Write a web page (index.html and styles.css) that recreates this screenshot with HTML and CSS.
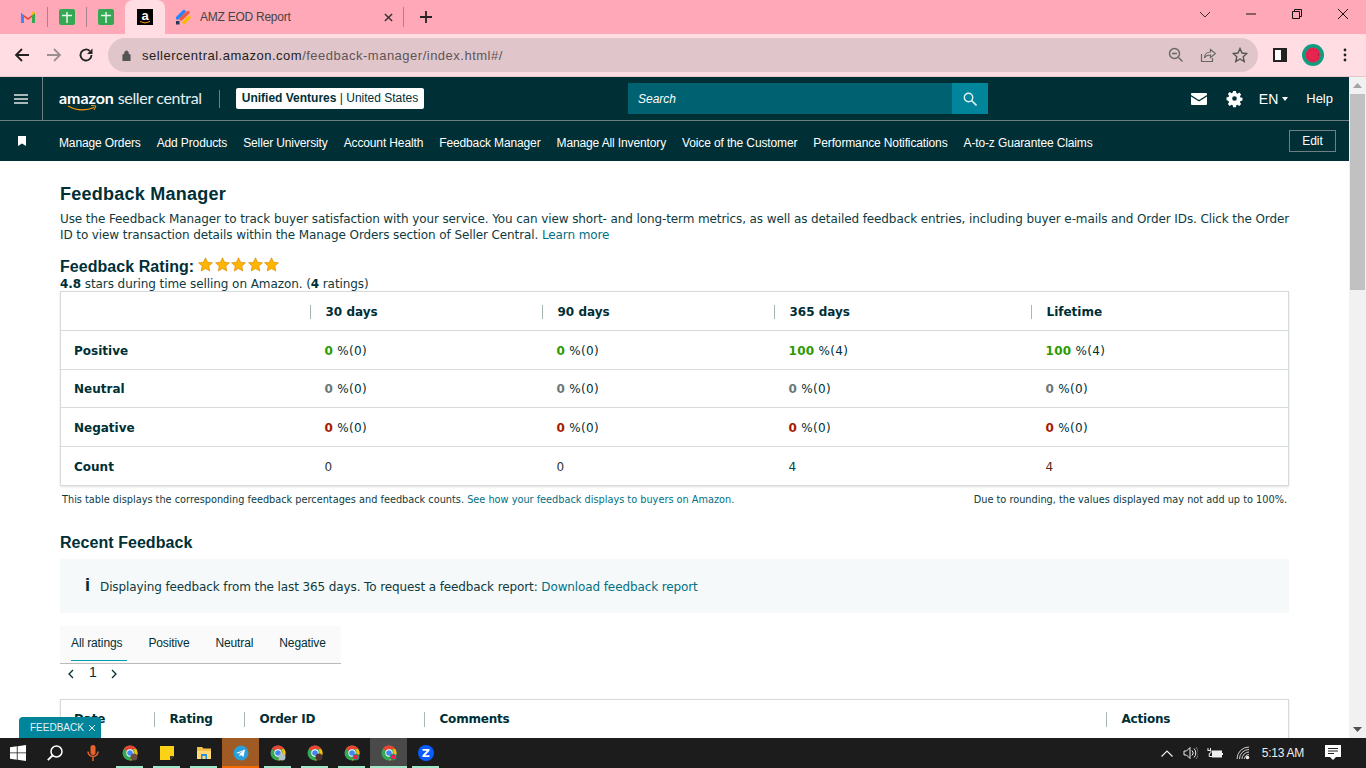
FILE: index.html
```html
<!DOCTYPE html>
<html lang="en">
<head>
<meta charset="utf-8">
<title>AMZ EOD Report</title>
<link rel="stylesheet" href="styles.css">
</head>
<body>
<div class="tabstrip">
  <div class="pinned">
    <svg class="fav" viewBox="0 0 16 16"><path d="M1 14V4l7 5 7-5v10h-3V8L8 11 4 8v6z" fill="#ea4335"/><path d="M1 14V4l3 2.500V14z" fill="#4285f4"/><path d="M12 14V6.500L15 4v10z" fill="#34a853"/><path d="M12 6.500 15 4v-.5L13 2.500l-1 1z" fill="#fbbc04"/></svg>
  </div>
  <i class="tabsep"></i>
  <div class="pinned"><svg class="fav" viewBox="0 0 16 16"><rect width="16" height="16" rx="2" fill="#34a853"/><path d="M8 3v11M3 6.500h10" stroke="#e6f4ea" stroke-width="1.500"/></svg></div>
  <i class="tabsep"></i>
  <div class="pinned"><svg class="fav" viewBox="0 0 16 16"><rect width="16" height="16" rx="2" fill="#34a853"/><path d="M8 3v11M3 6.500h10" stroke="#e6f4ea" stroke-width="1.500"/></svg></div>
  <div class="pinned active">
    <svg class="fav" viewBox="0 0 16 16"><rect width="16" height="16" fill="#000"/><text x="8" y="11" class="fav-a">a</text><path d="M3 12.500q5 3 10 0" stroke="#f90" fill="none"/></svg>
  </div>
  <div class="tab">
    <svg class="fav" viewBox="0 0 16 16"><path d="M2.500 9 9 2.500" stroke="#2684ff" stroke-width="3.400" stroke-linecap="round"/><path d="M6 10 13 3.500" stroke="#ef5a3c" stroke-width="3.400" stroke-linecap="round"/><path d="M9 13.500l5-5" stroke="#ffb900" stroke-width="3.400" stroke-linecap="round"/><path d="M1 12h3.500v3.500H1z" fill="#253858"/></svg>
    <span class="tab-title">AMZ EOD Report</span>
    <svg class="tab-x" viewBox="0 0 10 10"><path d="M1 1l8 8M9 1l-8 8" stroke="#333" stroke-width="1.600"/></svg>
  </div>
  <i class="tabsep"></i>
  <svg class="newtab" viewBox="0 0 12 12"><path d="M6 0v12M0 6h12" stroke="#222" stroke-width="1.800"/></svg>
  <div class="wincontrols">
    <svg class="wc-chev" viewBox="0 0 12 7"><path d="M1 1l5 5 5-5" fill="none" stroke="#333"/></svg>
    <svg class="wc" viewBox="0 0 12 12"><path d="M1 6h10" stroke="#111"/></svg>
    <svg class="wc" viewBox="0 0 12 12"><path d="M1.500 3.500h7v7h-7zM3.500 3.500v-2h7v7h-2" fill="none" stroke="#111"/></svg>
    <svg class="wc" viewBox="0 0 12 12"><path d="M1 1l10 10M11 1 1 11" stroke="#111"/></svg>
  </div>
</div>
<div class="toolbar">
  <svg class="tb-ico" viewBox="0 0 16 16"><path d="M15 8H2M8 2 2 8l6 6" fill="none" stroke="#222" stroke-width="1.800"/></svg>
  <svg class="tb-ico" viewBox="0 0 16 16"><path d="M1 8h13M8 2l6 6-6 6" fill="none" stroke="#9b8f92" stroke-width="1.800"/></svg>
  <svg class="tb-ico" viewBox="0 0 16 16"><path d="M13.500 8A5.500 5.500 0 1 1 11.800 4" fill="none" stroke="#222" stroke-width="1.800"/><path d="M14.500 1.500v5.500H9z" fill="#222"/></svg>
  <div class="omnibox">
    <svg class="lock" viewBox="0 0 10 12"><path d="M1 5h8v7H1zM3 5V3a2 2 0 0 1 4 0v2" fill="#555" stroke="#555"/></svg>
    <span class="url"><span class="url-host">sellercentral.amazon.com</span>/feedback-manager/index.html#/</span>
    <div class="omni-end">
      <svg class="omni-ico" viewBox="0 0 16 16"><circle cx="6.500" cy="6.500" r="5" fill="none" stroke="#666" stroke-width="1.400"/><path d="M4 6.500h5M10.500 10.500l4 4" stroke="#666" stroke-width="1.400"/></svg>
      <svg class="omni-ico" viewBox="0 0 16 16"><path d="M1.500 7v7.500h11V11" fill="none" stroke="#666" stroke-width="1.200"/><path d="M4.500 11c0-4 3-6 6-6V2.500l5 4-5 4V8c-3 0-5 1-6 3z" fill="none" stroke="#666" stroke-width="1.200"/></svg>
      <svg class="omni-ico" viewBox="0 0 16 16"><path d="M8 1.500l2 4.500 4.800.5-3.600 3.200 1 4.800L8 12l-4.200 2.500 1-4.800L1.200 6.500 6 6z" fill="none" stroke="#555" stroke-width="1.400"/></svg>
    </div>
  </div>
  <div class="tb-right">
    <svg class="side-ico" viewBox="0 0 14 14"><path d="M0 0h14v14H0z" fill="#222"/><path d="M2 2h6v10H2z" fill="#fff"/></svg>
    <svg class="avatar" viewBox="0 0 22 22"><circle cx="11" cy="11" r="11" fill="#0f9d80"/><circle cx="11" cy="11" r="7.500" fill="#e8254f"/><circle cx="11" cy="11" r="5.500" fill="none" stroke="#7a1030" stroke-width=".8" stroke-dasharray=".8 2.800"/></svg>
    <svg class="kebab" viewBox="0 0 4 14"><circle cx="2" cy="2" r="1.400" fill="#222"/><circle cx="2" cy="7" r="1.400" fill="#222"/><circle cx="2" cy="12" r="1.400" fill="#222"/></svg>
  </div>
</div>
<div class="viewport">
  <div class="page">
    <header class="head">
      <div class="burger"><svg viewBox="0 0 14 10"><path d="M0 1h14M0 5h14M0 9h14" stroke="#dfe6e7" stroke-width="1.300"/></svg></div>
      <div class="logo">
        <span class="logo-a">amazon</span><span class="logo-b">seller central</span>
        <svg class="smile" viewBox="0 0 30 7"><path d="M1 1q13 7 26 1.500" fill="none" stroke="#f90" stroke-width="1.300"/><path d="M24 .5l5 .5-2 4" fill="none" stroke="#f90"/></svg>
      </div>
      <i class="head-sep"></i>
      <div class="account"><b>Unified Ventures</b> | United States</div>
      <div class="search">
        <span class="search-text">Search</span>
        <span class="search-btn"><svg viewBox="0 0 14 14"><circle cx="5.500" cy="5.500" r="4.200" fill="none" stroke="#e6f1f3" stroke-width="1.400"/><path d="M8.500 8.500l5 5" stroke="#e6f1f3" stroke-width="1.600"/></svg></span>
      </div>
      <div class="head-right">
        <svg class="mail" viewBox="0 0 16 12"><path d="M1 0h14a1 1 0 0 1 1 1v1L8 7 0 2V1a1 1 0 0 1 1-1z" fill="#fff"/><path d="M0 3.500 8 8.500l8-5V11a1 1 0 0 1-1 1H1a1 1 0 0 1-1-1z" fill="#fff"/></svg>
        <svg class="gear" viewBox="0 0 16 16"><path fill-rule="evenodd" fill="#fff" d="M6.500 0h3l.4 2.200 1.300.6L13.100 1.500l2 2.100-1.300 1.900.6 1.300 2.100.4v3l-2.100.4-.6 1.300 1.300 1.900-2 2.100-1.900-1.300-1.300.6-.4 2.200h-3l-.4-2.200-1.300-.6-1.900 1.300-2-2.100 1.300-1.900-.6-1.300L-.5 9.700v-3l2.100-.4.6-1.300L.9 3.100l2-2.100 1.900 1.300 1.300-.6zM8 5.500a2.500 2.500 0 1 0 0 5 2.500 2.500 0 0 0 0-5z"/></svg>
        <span class="lang">EN<i class="caret"></i></span>
        <span class="help">Help</span>
      </div>
    </header>
    <nav class="nav">
      <svg class="bookmark" viewBox="0 0 8 10"><path d="M0 0h8v10L4 7.500 0 10z" fill="#fff"/></svg>
      <div class="nav-links">
        <a>Manage Orders</a><a>Add Products</a><a>Seller University</a><a>Account Health</a><a>Feedback Manager</a><a>Manage All Inventory</a><a>Voice of the Customer</a><a>Performance Notifications</a><a>A-to-z Guarantee Claims</a>
      </div>
      <span class="edit">Edit</span>
    </nav>
    <main class="content">
      <h1 class="title">Feedback Manager</h1>
      <p class="intro">Use the Feedback Manager to track buyer satisfaction with your service. You can view short- and long-term metrics, as well as detailed feedback entries, including buyer e-mails and Order IDs. Click the Order ID to view transaction details within the Manage Orders section of Seller Central. <a class="link">Learn more</a></p>
      <div class="rating-head">
        <h2 class="subtitle">Feedback Rating:</h2>
        <div class="stars">
          <svg viewBox="0 0 16 16"><path class="star" d="M8 .8l2.200 4.800 5.200.6-3.900 3.500 1.100 5.200L8 12.300l-4.600 2.600 1.100-5.200L.6 6.200l5.200-.6z"/></svg>
          <svg viewBox="0 0 16 16"><path class="star" d="M8 .8l2.200 4.800 5.200.6-3.900 3.500 1.100 5.200L8 12.300l-4.600 2.600 1.100-5.200L.6 6.200l5.200-.6z"/></svg>
          <svg viewBox="0 0 16 16"><path class="star" d="M8 .8l2.200 4.800 5.200.6-3.900 3.500 1.100 5.200L8 12.300l-4.600 2.600 1.100-5.200L.6 6.200l5.200-.6z"/></svg>
          <svg viewBox="0 0 16 16"><path class="star" d="M8 .8l2.200 4.800 5.200.6-3.900 3.500 1.100 5.200L8 12.300l-4.600 2.600 1.100-5.200L.6 6.200l5.200-.6z"/></svg>
          <svg viewBox="0 0 16 16"><path class="star" d="M8 .8l2.200 4.800 5.200.6-3.900 3.500 1.100 5.200L8 12.300l-4.600 2.600 1.100-5.200L.6 6.200l5.200-.6z"/></svg>
        </div>
      </div>
      <p class="rating-line"><b>4.8</b> stars during time selling on Amazon. (<b>4</b> ratings)</p>
      <table class="card metrics">
        <colgroup><col class="c0"><col class="c1"><col class="c1"><col class="c2"><col></colgroup>
        <thead>
          <tr><th></th><th><span class="th-in">30 days</span></th><th><span class="th-in">90 days</span></th><th><span class="th-in">365 days</span></th><th><span class="th-in">Lifetime</span></th></tr>
        </thead>
        <tbody>
          <tr class="r39"><th>Positive</th><td><b class="green">0</b> %(0)</td><td><b class="green">0</b> %(0)</td><td><b class="green">100</b> %(4)</td><td><b class="green">100</b> %(4)</td></tr>
          <tr class="r38"><th>Neutral</th><td><b class="grey">0</b> %(0)</td><td><b class="grey">0</b> %(0)</td><td><b class="grey">0</b> %(0)</td><td><b class="grey">0</b> %(0)</td></tr>
          <tr class="r39"><th>Negative</th><td><b class="red">0</b> %(0)</td><td><b class="red">0</b> %(0)</td><td><b class="red">0</b> %(0)</td><td><b class="red">0</b> %(0)</td></tr>
          <tr class="r39"><th>Count</th><td class="plain">0</td><td class="plain">0</td><td class="teal">4</td><td class="orange">4</td></tr>
        </tbody>
      </table>
      <div class="note">
        <span>This table displays the corresponding feedback percentages and feedback counts. <a class="link">See how your feedback displays to buyers on Amazon.</a></span>
        <span>Due to rounding, the values displayed may not add up to 100%.</span>
      </div>
      <h2 class="subtitle recent">Recent Feedback</h2>
      <div class="info">
        <span class="info-i">i</span>
        <span>Displaying feedback from the last 365 days. To request a feedback report: <a class="link">Download feedback report</a></span>
      </div>
      <div class="tabs">
        <span class="rtab on">All ratings</span><span class="rtab">Positive</span><span class="rtab">Neutral</span><span class="rtab">Negative</span>
      </div>
      <div class="pager">
        <svg viewBox="0 0 6 10"><path d="M5 1 1 5l4 4" fill="none" stroke="#002f36" stroke-width="1.300"/></svg>
        <span class="pg-num">1</span>
        <svg viewBox="0 0 6 10"><path d="M1 1l4 4-4 4" fill="none" stroke="#002f36" stroke-width="1.300"/></svg>
      </div>
      <div class="card list-head">
        <span class="lh lh-date">Date</span>
        <span class="lh lh-rating">Rating</span>
        <span class="lh lh-order">Order ID</span>
        <span class="lh lh-comments">Comments</span>
        <span class="lh lh-actions">Actions</span>
      </div>
    </main>
    <div class="feedback-tab">FEEDBACK<svg viewBox="0 0 8 8"><path d="M1 1l6 6M7 1 1 7" stroke="#e6f1f3"/></svg></div>
  </div>
  <div class="scrollbar">
    <svg class="arrow" viewBox="0 0 9 5"><path d="M4.500 0 9 5H0z" fill="#a3a3a3"/></svg>
    <div class="thumb"></div>
    <svg class="arrow down" viewBox="0 0 9 5"><path d="M0 0h9L4.500 5z" fill="#505050"/></svg>
  </div>
</div>
<footer class="taskbar">
  <svg class="tk-win" viewBox="0 0 16 16"><path d="M0 2.300 6.800 1.300v6.200H0zM7.600 1.200 16 0v7.500H7.600zM0 8.300h6.800v6.400L0 13.700zM7.600 8.300H16V16l-8.400-1.200z" fill="#fff"/></svg>
  <svg class="tk-search" viewBox="0 0 16 16"><circle cx="9.500" cy="6.500" r="5.500" fill="none" stroke="#fff" stroke-width="1.500"/><path d="M5.500 10.500 .8 15.200" stroke="#fff" stroke-width="1.800"/></svg>
  <svg class="tk-mic" viewBox="0 0 12 16"><rect x="3.500" y="0" width="5" height="10" rx="2.500" fill="#e8622c"/><path d="M1 6.500a5 5 0 0 0 10 0M6 11.500V16" fill="none" stroke="#e8622c" stroke-width="1.500"/></svg>
  <div class="tk-apps">
    <div class="tk-app run"><svg viewBox="0 0 16 16"><use href="#chrome"/><circle cx="12" cy="12" r="3.500" fill="#6d4c41"/></svg></div>
    <div class="tk-app run"><svg viewBox="0 0 16 16"><path d="M1 1h14v10l-4 4H1z" fill="#fcd116"/><path d="M15 11h-4v4z" fill="#333"/></svg></div>
    <div class="tk-app run"><svg viewBox="0 0 16 16"><path d="M1 2h5l1.500 1.500H15V14H1z" fill="#f5c04a"/><path d="M1 6h14v8H1z" fill="#ffd978"/><path d="M5 9h6v5H9.500v-3h-3v3H5z" fill="#2b8fdc"/></svg></div>
    <div class="tk-app tg"><svg viewBox="0 0 16 16"><circle cx="8" cy="8" r="7.500" fill="#2a9fd8"/><path d="M3 8l9-3.500L10.500 12 8 10l-1.500 1.500V9l4-3.500-5 3z" fill="#fff"/></svg></div>
    <div class="tk-app run"><svg viewBox="0 0 16 16"><use href="#chrome"/><circle cx="12" cy="12" r="3.500" fill="#b0bec5"/></svg></div>
    <div class="tk-app run"><svg viewBox="0 0 16 16"><use href="#chrome"/><circle cx="12" cy="12" r="3.500" fill="#4e342e"/></svg></div>
    <div class="tk-app run"><svg viewBox="0 0 16 16"><use href="#chrome"/><circle cx="12" cy="12" r="3" fill="#e8254f" stroke="#0f9d80"/></svg></div>
    <div class="tk-app run cur"><svg viewBox="0 0 16 16"><use href="#chrome"/><circle cx="12" cy="12" r="3" fill="#e8254f" stroke="#0f9d80"/></svg></div>
    <div class="tk-app run"><svg viewBox="0 0 16 16"><circle cx="8" cy="8" r="8" fill="#0b5cff"/><path d="M4.500 4h7v1.800L7.200 10.200h4.300V12h-7v-1.800l4.300-4.400H4.500z" fill="#fff"/></svg></div>
  </div>
  <div class="tray">
    <svg class="t-chev" viewBox="0 0 12 7"><path d="M.5 6.500 6 1l5.500 5.500" fill="none" stroke="#eee" stroke-width="1.200"/></svg>
    <svg class="t-vol" viewBox="0 0 15 14"><path d="M1 5h2.500L7 1.500v11L3.500 9H1z" fill="none" stroke="#eee"/><path d="M9 4.500a3.500 3.500 0 0 1 0 5M11 2.500a6.500 6.500 0 0 1 0 9" fill="none" stroke="#eee"/><path d="M13 1a9 9 0 0 1 0 12" fill="none" stroke="#777"/></svg>
    <svg class="t-bat" viewBox="0 0 16 11"><path d="M1 0v2.500M3.500 0v2.500M.5 2.500H4V4Q4 5.500 2.200 5.500V8.500H5" fill="none" stroke="#eee"/><rect x="5" y="2.500" width="10" height="7" fill="#eee"/><path d="M15 5h1v2h-1z" fill="#eee"/></svg>
    <svg class="t-wifi" viewBox="0 0 14 14"><path d="M1 13A12 12 0 0 1 13 1M3.500 13A9.500 9.500 0 0 1 13 3.500M6 13a7 7 0 0 1 7-7M8.500 13A4.500 4.500 0 0 1 13 8.500" fill="none" stroke="#cfcfcf"/><circle cx="11.500" cy="11.500" r="1.800" fill="#eee"/></svg>
    <span class="clock">5:13 AM</span>
    <svg class="t-note" viewBox="0 0 16 16"><path d="M0 0h16v12h-5l-3 3-3-3H0z" fill="#fff"/><path d="M3 3.500h10M3 6h10M3 8.500h6" stroke="#222"/></svg>
  </div>
</footer>
<svg class="defs" width="0" height="0"><defs>
  <g id="chrome"><circle cx="8" cy="8" r="7.500" fill="#34a853"/><path d="M8 .5a7.500 7.500 0 0 1 6.500 3.750H8A3.750 3.750 0 0 0 4.700 6.100L1.900 3.700A7.500 7.500 0 0 1 8 .5z" fill="#ea4335"/><path d="M14.500 4.250A7.500 7.500 0 0 1 8 15.500l3.200-5.500a3.750 3.750 0 0 0 0-5.750z" fill="#fbbc04"/><circle cx="8" cy="8" r="3.700" fill="#fff"/><circle cx="8" cy="8" r="2.800" fill="#4285f4"/></g>
</defs></svg>
</body>
</html>
```
FILE: styles.css
```css
* { box-sizing: border-box; }
html, body { margin: 0; height: 768px; overflow: hidden; }
body { display: flex; flex-direction: column; width: 1366px; font-family: "DejaVu Sans", sans-serif; color: #002f36; background: #fff; }
p, h1, h2 { margin: 0; }
svg { display: block; flex: none; }
.defs { position: absolute; }

/* browser chrome */
.tabstrip { height: 34px; flex: none; background: #ffa9b8; display: flex; align-items: center; padding-left: 9px; position: relative; font-family: "Open Sans", sans-serif; }
.pinned { width: 38px; height: 34px; display: flex; align-items: center; justify-content: center; }
.fav { width: 16px; height: 16px; }
.fav-a { font: bold 13px "Liberation Sans", sans-serif; fill: #fff; text-anchor: middle; }
.pinned.active { width: 40px; background: #ffdde3; border-radius: 8px 8px 0 0; }
.tabsep { width: 1px; height: 20px; background: #a9838c; flex: none; }
.tab { width: 238px; height: 34px; display: flex; align-items: center; padding-left: 10px; }
.tab-title { font-size: 12px; color: #444; margin-left: 9px; flex: 1; font-family: "Liberation Sans", sans-serif; letter-spacing: -.25px; }
.tab-x { width: 9px; height: 9px; margin-right: 10px; }
.newtab { width: 12px; height: 12px; margin-left: 16px; }
.wincontrols { position: absolute; right: 0; top: 0; height: 28px; display: flex; align-items: center; }
.wc-chev { width: 12px; height: 7px; margin-right: 34px; }
.wc { width: 12px; height: 12px; margin-right: 34px; }
.wc:last-child { margin-right: 17px; }

.toolbar { height: 43px; flex: none; background: #ffdde3; display: flex; align-items: center; padding-left: 14px; border-bottom: 1px solid #e9c6cc; }
.tb-ico { width: 16px; height: 16px; margin-right: 16px; }
.omnibox { width: 1150px; height: 34px; margin-left: -2px; background: #e0c6ca; border-radius: 17px; display: flex; align-items: center; padding-left: 14px; }
.lock { width: 9px; height: 11px; }
.url { font: 13px "Liberation Sans", sans-serif; color: #5f5558; margin-left: 11px; letter-spacing: .5px; }
.url-host { color: #222; }
.omni-end { margin-left: auto; display: flex; gap: 16px; padding-right: 10px; }
.omni-ico { width: 16px; height: 16px; }
.tb-right { display: flex; align-items: center; margin-left: 15px; }
.side-ico { width: 14px; height: 14px; }
.avatar { width: 22px; height: 22px; margin-left: 15px; }
.kebab { width: 4px; height: 14px; margin-left: 19px; }

/* viewport */
.viewport { flex: 1; display: flex; min-height: 0; position: relative; }
.page { flex: 1; min-width: 0; position: relative; overflow: hidden; display: flex; flex-direction: column; }
.scrollbar { width: 17px; flex: none; background: #f1f1f1; display: flex; flex-direction: column; align-items: center; padding-top: 6px; }
.arrow { width: 9px; height: 5px; }
.thumb { width: 15px; height: 196px; background: #c1c1c1; margin-top: 6px; }
.arrow.down { margin-top: auto; margin-bottom: 6px; }

.head { height: 44px; flex: none; background: #002f36; border-bottom: 1px solid #6d7f80; display: flex; align-items: center; position: relative; }
.burger { width: 43px; height: 43px; border-right: 1px solid #6d8083; display: flex; align-items: center; justify-content: center; }
.burger svg { width: 14px; height: 10px; }
.logo { margin-left: 16px; margin-top: -3px; position: relative; display: flex; align-items: baseline; color: #fff; font-family: "Lato", sans-serif; white-space: nowrap; }
.logo-a { font-size: 16px; font-weight: bold; letter-spacing: -.05px; }
.logo-b { font-size: 16px; margin-left: 4px; letter-spacing: -.35px; color: #e8eeee; }
.smile { position: absolute; left: 8px; top: 17px; width: 30px; height: 7px; }
.head-sep { width: 1px; height: 18px; background: #6d8083; margin-left: 17px; flex: none; }
.account { margin-left: 16px; height: 21px; padding: 0 6px; background: #fff; border-radius: 2px; color: #002f36; font: 12px/21px "Liberation Sans", sans-serif; white-space: nowrap; }
.search { position: absolute; left: 628px; top: 6px; width: 360px; height: 31px; background: #006170; display: flex; align-items: center; justify-content: space-between; padding-left: 10px; }
.search-text { color: #fff; font: italic 12px "Liberation Sans", sans-serif; }
.search-btn { width: 36px; height: 31px; background: #00859b; display: flex; align-items: center; justify-content: center; }
.search-btn svg { width: 14px; height: 14px; }
.head-right { margin-left: auto; display: flex; align-items: center; color: #fff; font: 14px "Liberation Sans", sans-serif; padding-right: 16px; }
.mail { width: 16px; height: 12px; }
.gear { width: 15px; height: 15px; margin-left: 20px; overflow: visible; }
.lang { margin-left: 17px; display: flex; align-items: center; }
.caret { width: 0; height: 0; border: 3.500px solid transparent; border-top: 4px solid #fff; border-bottom: 0; margin-left: 4px; }
.help { margin-left: 18px; font-size: 13px; }

.nav { height: 40px; flex: none; background: #002f36; display: flex; align-items: center; color: #fff; font: 12px "Liberation Sans", sans-serif; padding-right: 13px; }
.bookmark { width: 8px; height: 10px; margin-left: 18px; }
.nav-links { display: flex; gap: 16px; margin-left: 33px; margin-top: 3px; white-space: nowrap; letter-spacing: -.13px; }
.edit { margin-left: auto; width: 47px; height: 22px; border: 1px solid #6d8083; text-align: center; line-height: 20px; }

.content { flex: 1; min-height: 0; padding: 23px 60px 0; font-size: 12px; }
.title { font: bold 18px/20px "Liberation Sans", sans-serif; letter-spacing: .25px; color: #002f36; }
.intro { margin-top: 7px; font-size: 12px; line-height: 16px; letter-spacing: -.1px; color: #0f3a40; width: 1232px; }
.link { color: #007185; }
.rating-head { display: flex; align-items: center; margin-top: 15px; height: 18px; }
.subtitle { font: bold 16px/20px "Liberation Sans", sans-serif; letter-spacing: .05px; color: #002f36; }
.stars { display: flex; gap: 1.500px; margin-left: 4px; margin-top: -6px; }
.stars svg { width: 15px; height: 15px; }
.star { fill: #ffb400; stroke: #d98a00; stroke-width: .7; }
.rating-line { font-size: 12px; line-height: 14px; margin-top: 1px; letter-spacing: -.08px; color: #0f3a40; }
.rating-line b { color: #002f36; }

.card { border: 1px solid #d5dbdb; box-shadow: 0 1px 2px rgba(0,0,0,.12); background: #fff; }
.metrics { width: 1229px; border-collapse: collapse; table-layout: fixed; font-size: 12px; }
.c0 { width: 249px; }
.c1 { width: 232px; }
.c2 { width: 257px; }
.metrics th, .metrics td { padding: 1px 0 0 15px; text-align: left; border-top: 1px solid #d5dbdb; font-weight: normal; letter-spacing: .3px; }
.metrics thead th { border-top: 0; font-weight: bold; height: 39px; padding: 1px 0 0; letter-spacing: 0; }
.metrics tbody th { font-weight: bold; padding-left: 13px; letter-spacing: 0; }
.r38 > * { height: 38px; }
.r38 > th, .r38 > td { padding-top: 0; }
.r39 > * { height: 39px; }
.th-in { display: block; border-left: 1px solid #aab7b8; height: 14px; line-height: 14px; padding-left: 15px; }
.green { color: #2c9a00; }
.grey { color: #6c7778; }
.red { color: #a81a00; }
.plain { color: #333; }
.teal { color: #00464f; }
.orange { color: #5a2a10; }
.note { display: flex; justify-content: space-between; font-size: 9.750px; line-height: 12px; margin-top: 8px; padding: 0 2px; color: #0f3a40; white-space: nowrap; }
.recent { margin-top: 27px; }
.info { height: 54px; margin-top: 6px; padding-top: 1px; background: #f5f9f9; display: flex; align-items: center; padding-left: 25px; font-size: 12px; letter-spacing: -.11px; color: #0f3a40; }
.info-i { font: bold 18px "Liberation Sans", sans-serif; color: #002f36; width: 15px; margin-top: -2px; }
.tabs { margin-top: 13px; width: 281px; height: 38px; background: #fafafa; border-bottom: 1px solid #bbb; display: flex; padding-left: 11px; gap: 26px; font: 12px/34px "Liberation Sans", sans-serif; letter-spacing: -.12px; color: #002f36; }
.rtab { height: 35px; }
.rtab.on { border-bottom: 1px solid #00a0b0; padding-right: 5px; margin-right: -5px; }
.pager { display: flex; align-items: center; height: 20px; padding-left: 8px; font: 14px "Liberation Sans", sans-serif; }
.pager svg { width: 6px; height: 10px; }
.pg-num { margin: -4px 14px 0 15px; }
.list-head { margin-top: 15px; height: 60px; position: relative; font-weight: bold; font-size: 12px; letter-spacing: -.2px; }
.lh { position: absolute; top: 12px; line-height: 15px; height: 15px; padding-left: 14.500px; border-left: 1px solid #aab7b8; }
.lh-date { left: 13px; border-left: 0; padding-left: 0; }
.lh-rating { left: 93px; }
.lh-order { left: 183px; }
.lh-comments { left: 363px; }
.lh-actions { left: 1045px; }
.feedback-tab { position: absolute; left: 19px; bottom: 0; width: 82px; height: 21px; padding-top: 1px; background: #00859b; border-radius: 4px 4px 0 0; color: #e6f1f3; font: 10px/20px "Liberation Sans", sans-serif; display: flex; align-items: center; padding-left: 11px; gap: 4px; }
.feedback-tab svg { width: 8px; height: 8px; }

/* taskbar */
.taskbar { height: 30px; flex: none; background: #1c1c1c; display: flex; align-items: center; position: relative; color: #eee; }
.tk-win { width: 16px; height: 16px; margin-left: 10px; }
.tk-search { width: 16px; height: 16px; margin-left: 21px; }
.tk-mic { width: 12px; height: 16px; margin-left: 24px; }
.tk-apps { display: flex; position: absolute; left: 111px; top: 0; height: 30px; }
.tk-app { width: 37px; height: 30px; display: flex; align-items: center; justify-content: center; padding-bottom: 1px; position: relative; }
.tk-app svg { width: 16px; height: 16px; }
.tk-app.run::after { content: ""; position: absolute; left: 5px; right: 5px; bottom: 0; height: 2px; background: #9fe8c8; }
.tk-app.tg { background: #a05a24; }
.tk-app.tg::after { content: ""; position: absolute; left: 0; right: 0; bottom: 0; height: 2px; background: #f56a00; }
.tk-app.cur { background: #4a4a4a; }
.tk-app.cur::after { left: 0; right: 0; }
.tray { margin-left: auto; display: flex; align-items: center; padding-right: 25px; }
.t-chev { width: 12px; height: 7px; }
.t-vol { width: 15px; height: 14px; margin-left: 10px; }
.t-bat { width: 16px; height: 11px; margin-left: 9px; }
.t-wifi { width: 14px; height: 14px; margin-left: 13px; }
.clock { font: 12px "Liberation Sans", sans-serif; letter-spacing: -.25px; margin-left: 12px; }
.t-note { width: 16px; height: 16px; margin-left: 21px; }
```
